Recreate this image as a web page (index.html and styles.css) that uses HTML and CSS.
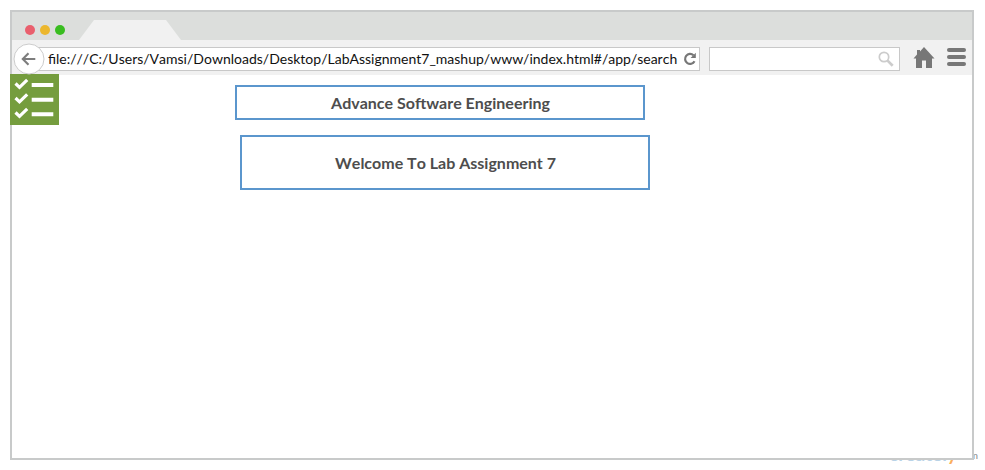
FILE: index.html
```html
<!DOCTYPE html>
<html lang="en">
<head>
<meta charset="utf-8">
<title>Lab Assignment 7</title>
<link rel="stylesheet" href="styles.css">
</head>
<body>
<div class="watermark"><span class="brand">createl<span class="brand-y">y</span></span><span class="domain">.com</span></div>
<div class="browser">
  <header class="tabs">
    <i class="dot red"></i><i class="dot yellow"></i><i class="dot green"></i>
    <div class="tab"></div>
  </header>
  <nav class="toolbar">
    <svg class="back" viewBox="0 0 32 32"><circle cx="16" cy="16" r="15" fill="#fff" stroke="#ccc"/><path d="M22.300 16H10M15.500 10.300L9.800 16l5.700 5.700" fill="none" stroke="#7d7d7d" stroke-width="2.100"/></svg>
    <div class="address">
      <span class="url">file:///C:/Users/Vamsi/Downloads/Desktop/LabAssignment7_mashup/www/index.html#/app/search</span>
      <svg class="reload" viewBox="0 0 14 14"><path d="M10.500 3.300A5 5 0 1 0 11.500 9.300" fill="none" stroke="#777" stroke-width="2.200"/><path d="M12.800 .8V6H7.600z" fill="#777"/></svg>
    </div>
    <div class="search">
      <svg class="lens" viewBox="0 0 16 16"><circle cx="6" cy="6" r="4.700" fill="none" stroke="#ccc" stroke-width="1.700"/><path d="M9.300 9.400L14.700 14.700" stroke="#ccc" stroke-width="2.700"/></svg>
    </div>
    <svg class="home" viewBox="0 0 22 22"><path d="M11 0L21.500 11.500H19V21H13V13.500H9V21H3V11.500H.5L4 7.500V3h3v1.400z" fill="#777"/></svg>
    <div class="menu"><i></i><i></i><i></i></div>
  </nav>
  <main class="page">
    <svg class="checklist" viewBox="0 0 49 51"><path d="M0 0h49v51H0z" fill="#759d3e"/><path d="M5.500 9.500l4 3.800 7.700-7.500M5.500 24l4 3.800 7.700-7.500M5.500 38.500l4 3.800 7.700-7.500" fill="none" stroke="#fff" stroke-width="3.200"/><path d="M21.700 11h21.600M21.700 25.700h21.600M21.700 40.200h21.600" stroke="#fff" stroke-width="4"/></svg>
    <h1 class="box title">Advance Software Engineering</h1>
    <h2 class="box welcome">Welcome To Lab Assignment 7</h2>
  </main>
</div>
</body>
</html>
```
FILE: styles.css
```css
* { box-sizing: border-box; }
body { margin: 0; padding: 10px; height: 470px; overflow: hidden; position: relative; background: #fff; font-family: Lato, sans-serif; font-kerning: none; }
svg { display: block; flex: none; }
.browser { position: relative; width: 964px; height: 450px; border: 2px solid #c8caca; background: #fff; }
.tabs { height: 28px; display: flex; align-items: center; background: #dcdedc; padding: 7px 0 0 13px; gap: 5px; }
.dot { width: 10px; height: 10px; border-radius: 50%; }
.red { background: #e95f6d; }
.yellow { background: #ecb72d; }
.green { background: #39bd20; }
.tab { width: 103px; height: 20px; margin-left: 9px; background: #f1f1f1; clip-path: polygon(15px 0, 87px 0, 102px 100%, 0 100%); align-self: flex-end; }
.toolbar { height: 35px; display: flex; align-items: center; background: #f1f1f1; padding-left: 1px; }
.back { width: 32px; height: 32px; position: relative; z-index: 1; top: 1px; }
.address { width: 671px; height: 24px; margin: 3px 9px 0 -16px; padding: 0 2px 0 18px; display: flex; align-items: center; justify-content: space-between; background: #fff; border: 1px solid #c8c8c8; }
.url { font-size: 14px; line-height: 22px; color: #111; white-space: nowrap; }
.reload { width: 14px; height: 14px; }
.search { width: 191px; height: 24px; margin-top: 3px; padding-right: 5px; display: flex; align-items: center; justify-content: flex-end; background: #fff; border: 1px solid #c8c8c8; }
.lens { width: 16px; height: 16px; }
.home { width: 22px; height: 22px; margin: 0 0 0 13px; }
.menu { width: 19px; margin: -1px 0 0 12px; display: grid; gap: 3px; }
.menu i { height: 4px; border-radius: 2px; background: #777; }
.page { height: 383px; display: grid; grid-template-columns: 223px 415px 1fr; grid-template-rows: 45px 55px; row-gap: 15px; }
.checklist { width: 49px; height: 51px; margin: -1px 0 0 -2px; position: relative; }
.box { grid-column: 2; margin: 0; width: 410px; padding-left: 1px; border: 2px solid #5b96cd; display: flex; align-items: center; justify-content: center; font-size: 16px; font-weight: 700; color: #4d4d4d; }
.title { grid-row: 1; height: 35px; margin-top: 10px; }
.welcome { grid-row: 2; height: 55px; margin-left: 5px; }
.watermark { position: absolute; left: 889px; top: 442px; height: 24px; display: flex; }
.brand { font-size: 19px; line-height: 24px; font-weight: 700; color: #b9d3e7; }
.brand-y { color: #fbaf5d; }
.domain { font-size: 10px; line-height: 24px; padding-top: 1px; color: #888; }
```
